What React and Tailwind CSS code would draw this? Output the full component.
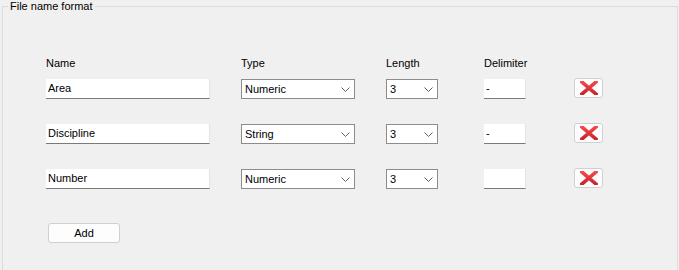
const rows = [
  { name: 'Area', type: 'Numeric', length: '3', delimiter: '-' },
  { name: 'Discipline', type: 'String', length: '3', delimiter: '-' },
  { name: 'Number', type: 'Numeric', length: '3', delimiter: '' },
];

const Chevron = () => (
  <svg width="9" height="5" viewBox="0 0 9 5" className="shrink-0">
    <path d="M0.5 0.5 L4.5 4.5 L8.5 0.5" fill="none" stroke="#606060" strokeWidth="1" />
  </svg>
);

const RedX = () => (
  <svg width="18" height="14" viewBox="0 0 18 14">
    <defs>
      <linearGradient id="xg" x1="0" y1="0" x2="0" y2="1">
        <stop offset="0" stopColor="#f5474c" />
        <stop offset="1" stopColor="#c8242b" />
      </linearGradient>
    </defs>
    <path d="M2 1 L16 13 M16 1 L2 13" stroke="url(#xg)" strokeWidth="3.6" strokeLinecap="square" />
  </svg>
);

const TextBox = ({ value, width }) => (
  <div className={`${width} h-[20px] bg-white border-b border-b-[#7a7a7a] border-r border-r-[#e3e3e3] flex items-center pl-[2px] text-black`}>
    {value}
  </div>
);

const Combo = ({ value, width }) => (
  <div className={`${width} h-[20px] bg-white border border-[#8c8c8c] flex items-center justify-between pl-[3px] pr-[4px] text-black`}>
    <span>{value}</span>
    <Chevron />
  </div>
);

export default function App() {
  return (
    <div
      className="w-[679px] h-[270px] bg-[#f0f0f0] overflow-hidden text-[11px] text-black"
      style={{ fontFamily: '"Liberation Sans", Arial, sans-serif' }}
    >
      <div className="relative mt-[6px] ml-[2px] w-[676px] h-[290px] border border-[#dcdcdc] pl-[43px] pt-[50px]">
        {/* group title over the border */}
        <span className="absolute -top-[8px] left-[5px] px-[2px] bg-[#f0f0f0] leading-[14px]">
          File name format
        </span>

        {/* column headings */}
        <div className="flex leading-[13px]">
          <div className="w-[164px]">Name</div>
          <div className="ml-[31px] w-[114px]">Type</div>
          <div className="ml-[31px] w-[52px]">Length</div>
          <div className="ml-[46px] w-[42px]">Delimiter</div>
        </div>

        <div className="flex flex-col gap-[25px] mt-[9px]">
          {rows.map((row) => (
            <div key={row.name} className="flex items-start">
              <TextBox value={row.name} width="w-[164px]" />
              <div className="ml-[31px]">
                <Combo value={row.type} width="w-[114px]" />
              </div>
              <div className="ml-[31px]">
                <Combo value={row.length} width="w-[52px]" />
              </div>
              <div className="ml-[46px]">
                <TextBox value={row.delimiter} width="w-[42px]" />
              </div>
              <button className="ml-[48px] -mt-[1px] w-[29px] h-[20px] bg-[#fdfdfd] border border-[#d0d0d0] rounded-[3px] flex items-center justify-center">
                <RedX />
              </button>
            </div>
          ))}
        </div>

        <button className="mt-[34px] ml-[2px] w-[72px] h-[20px] bg-[#fdfdfd] border border-[#d0d0d0] rounded-[3px] flex items-center justify-center">
          Add
        </button>
      </div>
    </div>
  );
}
